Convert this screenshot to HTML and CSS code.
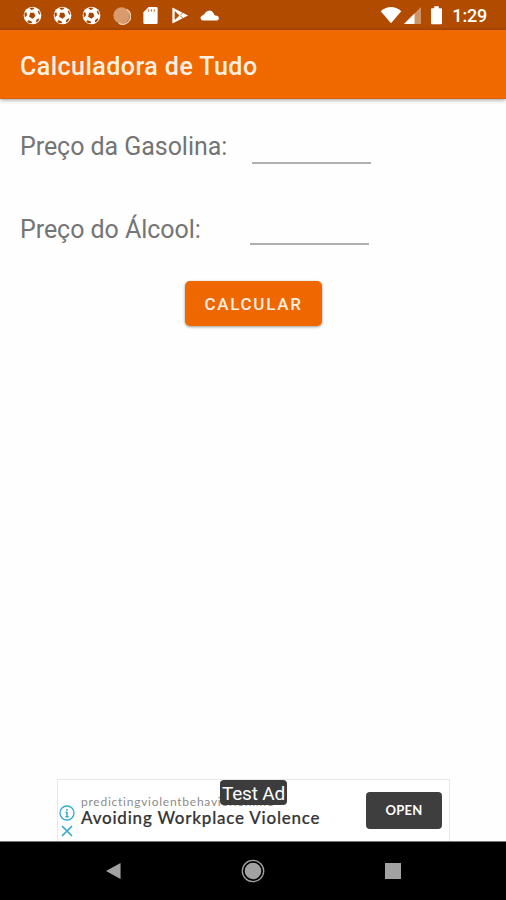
FILE: index.html
```html
<!DOCTYPE html>
<html lang="pt-BR">
<head>
<meta charset="utf-8">
<title>Calculadora de Tudo</title>
<link rel="stylesheet" href="styles.css">
</head>
<body>
<svg class="defs" width="0" height="0" aria-hidden="true">
  <symbol id="ball" viewBox="0 0 20 20">
    <circle cx="10" cy="10" r="9.3" fill="#fff"/>
    <path d="M7.500 7l4.200.2 1.300 3.600-3 2.700-3.600-2.200zM6.500 2.200l4-.7 1.500 1.500-3 1.300zM1.500 7l2.200-.3.5 3-2.300 2.300zM5.500 15l3.500 1 .5 2-3 .2-2-1.700zM14 14.500l2.800-1.500.3 1.500-2.300 2.600-1.200-.3zM15.500 5.500l1.200-.7 1.600 3.600-1.300.8z" fill="#a84600"/>
  </symbol>
</svg>
<header class="status">
  <div class="notices">
    <svg class="ball"><use href="#ball"/></svg>
    <svg class="ball"><use href="#ball"/></svg>
    <svg class="ball"><use href="#ball"/></svg>
    <svg class="sync" viewBox="0 0 20 20"><circle cx="10" cy="10" r="8.600" fill="#d99a6c"/><path d="M15.500 3.500A8.400 8.400 0 0 1 7 18" fill="none" stroke="#f0cfb7" stroke-width="1.500"/></svg>
    <svg class="card" viewBox="0 0 16 20"><path d="M6 1h8q1.500 0 1.500 1.500v15q0 1.500-1.500 1.500H2q-1.500 0-1.500-1.500V6.500z" fill="#fff"/><path d="M6 3.500v2.500M9 3.500v2.500M12 3.500v2.500" stroke="#c9834f" stroke-width="1.300"/></svg>
    <svg class="play" viewBox="0 0 18 20"><path d="M1 1.500L17.500 10 1 18.500z" fill="#fff"/><path d="M3.800 6L8 10 3.800 14zM9.500 9.700l3.500-3.500M9.500 10.300l3.500 3.500" fill="#b04b00" stroke="#b04b00" stroke-width=".8"/></svg>
    <svg class="cloud" viewBox="0 0 20 12"><path d="M3 11.500a2.600 2.600 0 0 1-.2-5L5 5A5 5 0 0 1 14 4l1 2.300 2.500.5a2.400 2.400 0 0 1 0 4.700z" fill="#fff"/></svg>
  </div>
  <div class="system">
    <svg class="wifi" viewBox="0 0 24 18"><path d="M.8 4.800Q12-4 23.200 4.800L12 18z" fill="#fff"/></svg>
    <svg class="signal" viewBox="0 0 17 17"><path d="M0 17L17 0v17z" fill="#d19467"/><path d="M0 17L10.500 6.500V17z" fill="#fff"/></svg>
    <svg class="battery" viewBox="0 0 12 20"><path d="M3.500 0h5v2H11q1 0 1 1v15.500q0 1-1 1H1q-1 0-1-1V3q0-1 1-1h2.500z" fill="#fff"/></svg>
    <span class="clock">1:29</span>
  </div>
</header>
<div class="appbar"><h1>Calculadora de Tudo</h1></div>
<main>
  <div class="row gas"><label for="gas">Preço da Gasolina:</label><input id="gas"></div>
  <div class="row alcohol"><label for="alc">Preço do Álcool:</label><input id="alc"></div>
  <button class="calc">CALCULAR</button>
</main>
<section class="ad">
  <div class="ad-icons">
    <svg class="info" viewBox="0 0 16 16" fill="none" stroke="#35a9cf"><circle cx="8" cy="8" r="7" stroke-width="1.300"/><path d="M8 4v1.800M8 7v5M6.500 7.300H8M6.300 11.700h3.400" stroke-width="1.500"/></svg>
    <svg class="close" viewBox="0 0 12 12"><path d="M1 1l10 10M11 1l-10 10" stroke="#35a9cf" stroke-width="1.700"/></svg>
  </div>
  <div class="ad-copy">
    <span class="domain">predictingviolentbehavior.online</span>
    <strong class="headline">Avoiding Workplace Violence</strong>
  </div>
  <button class="open">OPEN</button>
  <span class="test">Test Ad</span>
</section>
<nav>
  <svg class="back" viewBox="0 0 16 18"><path d="M0 9L15.500.5v17z" fill="#a2a2a2"/></svg>
  <svg class="home" viewBox="0 0 24 24"><circle cx="12" cy="12" r="10.700" fill="none" stroke="#a2a2a2" stroke-width="1.300"/><circle cx="12" cy="12" r="8.300" fill="#a2a2a2"/></svg>
  <span class="recent"></span>
</nav>
</body>
</html>
```
FILE: styles.css
```css
* { box-sizing: border-box; }
body {
  margin: 0;
  height: 900px;
  display: flex;
  flex-direction: column;
  overflow: hidden;
  background: #fefefe;
  font-family: Roboto, sans-serif;
}
svg { display: block; flex: none; }
.defs { position: absolute; }
.status {
  height: 30px;
  flex: none;
  display: flex;
  justify-content: space-between;
  padding: 0 19px 0 23px;
  background: #b04b00;
}
.notices, .system { display: flex; align-items: center; }
.ball { width: 19px; height: 19px; margin-right: 10.500px; }
.sync { width: 19px; height: 19px; margin-right: 11px; }
.card { width: 17px; height: 19px; margin-right: 12px; }
.play { width: 18px; height: 19px; margin-right: 10px; }
.cloud { width: 21px; height: 12px; }
.wifi { width: 22px; height: 18px; margin-right: 2px; }
.signal { width: 17px; height: 17px; margin: 1px 10px 0 0; }
.battery { width: 11px; height: 19px; margin-right: 10px; }
.clock { color: #fff; font-size: 18px; font-weight: 500; line-height: 30px; padding-top: 2px; letter-spacing: -.2px; }
.appbar {
  height: 69px;
  flex: none;
  display: flex;
  align-items: center;
  padding: 4px 20px 0;
  background: #f06800;
  border-bottom: 1px solid #dc6407;
  box-shadow: 0 1px 4px rgba(0, 0, 0, .4);
}
h1 { margin: 0; color: #fff0e2; font-size: 25px; font-weight: 500; letter-spacing: .46px; }
main { flex: 1; display: flex; flex-direction: column; align-items: flex-start; }
.row { display: flex; align-items: flex-start; color: #747474; font-size: 25px; line-height: 32px; letter-spacing: -.05px; padding-left: 20px; }
.gas { margin-top: 32px; height: 33px; }
.alcohol { margin-top: 50px; height: 31px; }
.row label { width: 231.500px; white-space: nowrap; }
.alcohol label { width: 230px; }
.row input {
  width: 119px;
  height: 100%;
  padding: 0;
  border: 0;
  border-bottom: 2px solid #b0b0b0;
  background: transparent;
  outline: 0;
}
.calc {
  width: 137px;
  height: 45px;
  margin: 36px 0 0 185px;
  padding: 0;
  border: 0;
  border-radius: 5px;
  background: #ee6700;
  box-shadow: 0 1px 3px rgba(0, 0, 0, .4);
  color: #fff0e2;
  font: 500 17px Roboto, sans-serif;
  letter-spacing: 1.700px;
}
.ad {
  position: relative;
  width: 393px;
  height: 62px;
  flex: none;
  margin-left: 57px;
  display: flex;
  border: 1px solid #e8e8e8;
  border-width: 1px 1px 0;
  background: #fff;
}
.ad-icons { width: 23px; padding: 25px 0 0 1px; }
.info { width: 16px; height: 16px; }
.close { width: 12px; height: 12px; margin: 4px 0 0 2px; }
.ad-copy { display: flex; flex-direction: column; padding-top: 14px; width: 285px; white-space: nowrap; font-family: Lato, sans-serif; }
.domain { color: #8c8c8c; font-size: 12px; line-height: 15px; letter-spacing: .75px; }
.headline { color: #343434; font-size: 17px; font-weight: 500; line-height: 18px; letter-spacing: .77px; -webkit-text-stroke: .2px #343434; }
.open {
  width: 76px;
  height: 37px;
  margin-top: 12px;
  padding: 0 0 2px;
  border: 0;
  border-radius: 4px;
  background: #3e3e3e;
  color: #fff;
  font: 700 13px Lato, sans-serif;
  letter-spacing: .2px;
}
.test {
  position: absolute;
  left: 162px;
  top: 0;
  width: 67px;
  height: 25px;
  border-radius: 4px;
  background: #3c3c3c;
  color: #fff;
  font-size: 19px;
  line-height: 27px;
  letter-spacing: -.2px;
  text-align: center;
  white-space: nowrap;
}
nav {
  height: 59px;
  flex: none;
  display: flex;
  align-items: center;
  justify-content: space-between;
  padding: 0 105px 0 106px;
  background: #000;
  border-top: 1px solid #777;
}
.back { width: 15px; height: 18px; }
.home { width: 24px; height: 24px; }
.recent { width: 16px; height: 16px; background: #a2a2a2; }
```
